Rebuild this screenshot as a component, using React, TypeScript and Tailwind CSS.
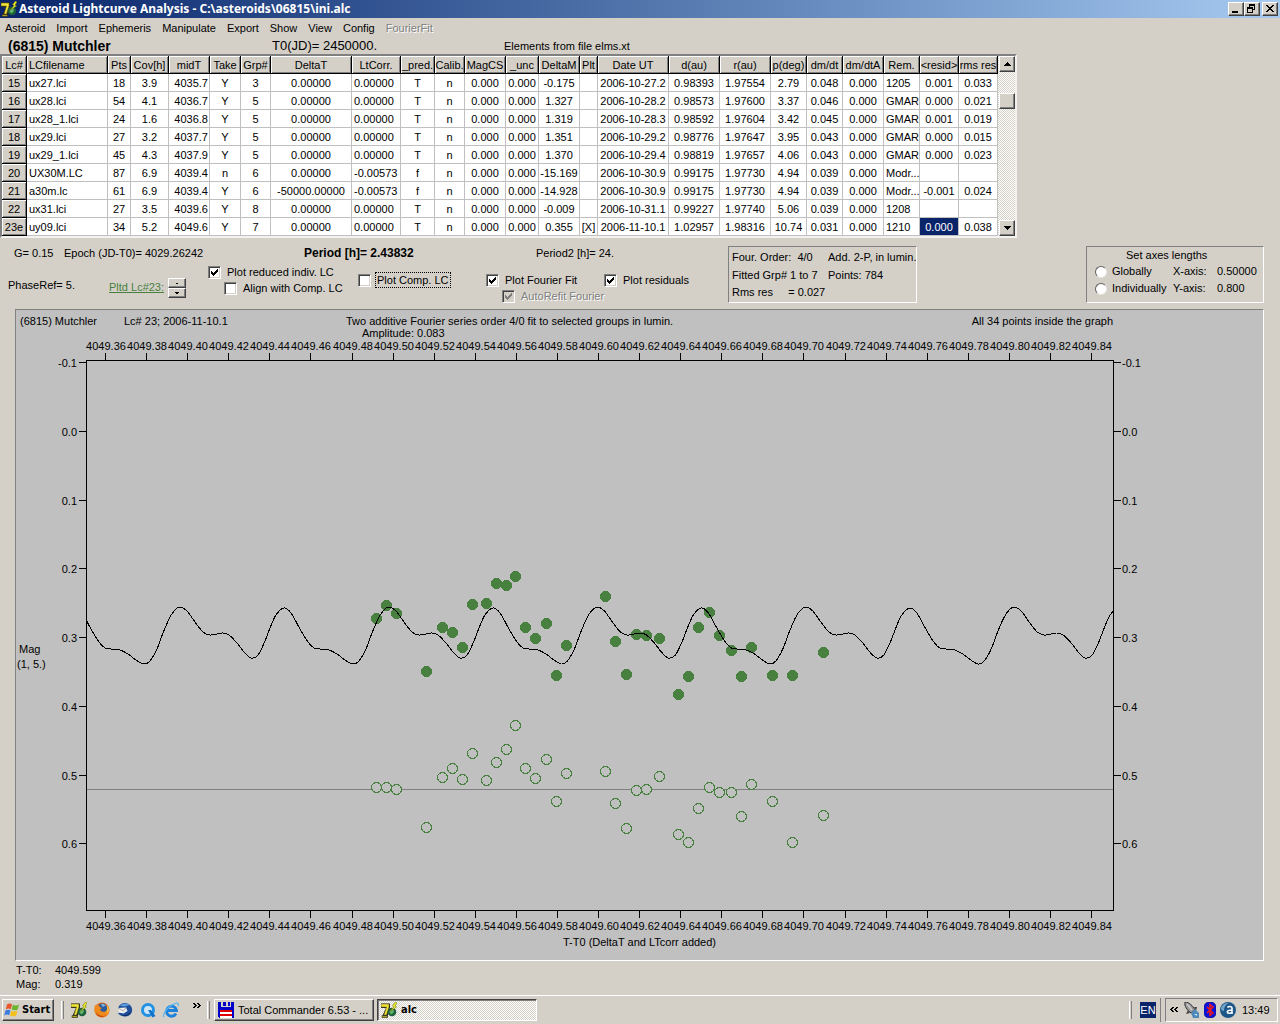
import React, { useState } from 'react';

type Align = 'left' | 'center' | 'right';

interface Column {
  label: string;
  width: string;
  align: Align;
}

const columns: Column[] = [
  { label: 'LCfilename', width: 'w-[81px]', align: 'left' },
  { label: 'Pts', width: 'w-[23px]', align: 'center' },
  { label: 'Cov[h]', width: 'w-[38px]', align: 'center' },
  { label: 'midT', width: 'w-[41px]', align: 'right' },
  { label: 'Take', width: 'w-[31px]', align: 'center' },
  { label: 'Grp#', width: 'w-[30px]', align: 'center' },
  { label: 'DeltaT', width: 'w-[81px]', align: 'center' },
  { label: 'LtCorr.', width: 'w-[49px]', align: 'left' },
  { label: '_pred.', width: 'w-[34px]', align: 'center' },
  { label: 'Calib.', width: 'w-[30px]', align: 'center' },
  { label: 'MagCS', width: 'w-[41px]', align: 'center' },
  { label: '_unc', width: 'w-[33px]', align: 'center' },
  { label: 'DeltaM', width: 'w-[41px]', align: 'center' },
  { label: 'Plt', width: 'w-[18px]', align: 'center' },
  { label: 'Date UT', width: 'w-[71px]', align: 'center' },
  { label: 'd(au)', width: 'w-[51px]', align: 'center' },
  { label: 'r(au)', width: 'w-[51px]', align: 'center' },
  { label: 'p(deg)', width: 'w-[36px]', align: 'center' },
  { label: 'dm/dt', width: 'w-[36px]', align: 'center' },
  { label: 'dm/dtA', width: 'w-[41px]', align: 'center' },
  { label: 'Rem.', width: 'w-[36px]', align: 'left' },
  { label: '<resid>', width: 'w-[39px]', align: 'center' },
  { label: 'rms res', width: 'w-[39px]', align: 'center' },
];

const rows: string[][] = [
  ['15', 'ux27.lci', '18', '3.9', '4035.7', 'Y', '3', '0.00000', '0.00000', 'T', 'n', '0.000', '0.000', '-0.175', '', '2006-10-27.2', '0.98393', '1.97554', '2.79', '0.048', '0.000', '1205', '0.001', '0.033'],
  ['16', 'ux28.lci', '54', '4.1', '4036.7', 'Y', '5', '0.00000', '0.00000', 'T', 'n', '0.000', '0.000', '1.327', '', '2006-10-28.2', '0.98573', '1.97600', '3.37', '0.046', '0.000', 'GMAR', '0.000', '0.021'],
  ['17', 'ux28_1.lci', '24', '1.6', '4036.8', 'Y', '5', '0.00000', '0.00000', 'T', 'n', '0.000', '0.000', '1.319', '', '2006-10-28.3', '0.98592', '1.97604', '3.42', '0.045', '0.000', 'GMAR', '0.001', '0.019'],
  ['18', 'ux29.lci', '27', '3.2', '4037.7', 'Y', '5', '0.00000', '0.00000', 'T', 'n', '0.000', '0.000', '1.351', '', '2006-10-29.2', '0.98776', '1.97647', '3.95', '0.043', '0.000', 'GMAR', '0.000', '0.015'],
  ['19', 'ux29_1.lci', '45', '4.3', '4037.9', 'Y', '5', '0.00000', '0.00000', 'T', 'n', '0.000', '0.000', '1.370', '', '2006-10-29.4', '0.98819', '1.97657', '4.06', '0.043', '0.000', 'GMAR', '0.000', '0.023'],
  ['20', 'UX30M.LC', '87', '6.9', '4039.4', 'n', '6', '0.00000', '-0.00573', 'f', 'n', '0.000', '0.000', '-15.169', '', '2006-10-30.9', '0.99175', '1.97730', '4.94', '0.039', '0.000', 'Modr...', '', ''],
  ['21', 'a30m.lc', '61', '6.9', '4039.4', 'Y', '6', '-50000.00000', '-0.00573', 'f', 'n', '0.000', '0.000', '-14.928', '', '2006-10-30.9', '0.99175', '1.97730', '4.94', '0.039', '0.000', 'Modr...', '-0.001', '0.024'],
  ['22', 'ux31.lci', '27', '3.5', '4039.6', 'Y', '8', '0.00000', '0.00000', 'T', 'n', '0.000', '0.000', '-0.009', '', '2006-10-31.1', '0.99227', '1.97740', '5.06', '0.039', '0.000', '1208', '', ''],
  ['23e', 'uy09.lci', '34', '5.2', '4049.6', 'Y', '7', '0.00000', '0.00000', 'T', 'n', '0.000', '0.000', '0.355', '[X]', '2006-11-10.1', '1.02957', '1.98316', '10.74', '0.031', '0.000', '1210', '0.000', '0.038'],
];

const SELECTED_COL = 21;

const alignClass: Record<Align, string> = {
  left: 'text-left pl-[2px]',
  center: 'text-center',
  right: 'text-right pr-px',
};

const raised =
  'bg-[#d4d0c8] border border-t-white border-l-white border-r-[#404040] border-b-[#404040] shadow-[inset_-1px_-1px_0_#808080]';
const fixedCell =
  'h-[18px] p-0 pt-[2px] overflow-hidden font-normal bg-[#d4d0c8] border-r border-b border-black shadow-[inset_1px_1px_0_#fff,inset_-1px_-1px_0_#808080]';
const dither = 'bg-[repeating-conic-gradient(#fff_0_25%,#d4d0c8_0_50%)] bg-[length:2px_2px]';

/* ---------- icons ---------- */

const AlcIcon = () => (
  <svg viewBox="0 0 16 16" className="w-4 h-4 shrink-0">
    <path d="M0 1.500h9v4L6.500 15H2V12.500L5 6H0z" fill="#222" />
    <path d="M0 2h8v3L5.500 13H3L5.500 5H0z" fill="#f2e63c" stroke="#6b6510" strokeWidth=".6" />
    <path d="M1 13.500h5.500v2H1z" fill="#a8a020" stroke="#222" strokeWidth=".6" />
    <circle cx="11" cy="10" r="4.300" fill="#1d5f3a" />
    <path d="M9 8.500l2-1 2 1-.5 2-2 2-2-2z" fill="#5fb56a" />
    <path d="M14.500 0l-3 3.500 1.500 1L9 9.500l6.500-4.500-1.500-1L16 1z" fill="#f6ee22" stroke="#556b10" strokeWidth=".5" />
  </svg>
);

const FirefoxIcon = () => (
  <svg viewBox="0 0 16 16" className="w-4 h-4">
    <circle cx="8" cy="8" r="7.500" fill="#e0661a" />
    <circle cx="8.500" cy="6.500" r="5" fill="#2c5c9e" />
    <path d="M7 2.500c2-1 4 0 4.500 1L9 5z" fill="#7fb4dc" />
    <path d="M1 3c1 .5 1.500.5 2.500.2C5 3 6 4 5.500 5L8 6 6 7.500C7 10 10 10.500 12 9c1.500-1.500 1-4 .5-6C15 5 16 9 14 12c-2.500 4-9 4.500-12 .5C0 9.500 0 6 1 3z" fill="#f08a1d" />
    <path d="M12.500 3c2.500 2.500 3 6 .5 9 .5-3 .8-6-.5-9z" fill="#fbd24a" />
    <path d="M2 10c2 4 7 5 10 3-3 3-9 2.500-10-3z" fill="#b5350f" />
  </svg>
);

const ThunderbirdIcon = () => (
  <svg viewBox="0 0 16 16" className="w-4 h-4">
    <path d="M2 4C5-.5 12 0 14.500 5c2 5-1 9.500-6 9.500C5 14.500 2 13 1 11l4-1-4-3z" fill="#1f4f9a" />
    <path d="M3 4c3-3 7-3 9.500-1L8 4.500z" fill="#5b9bdc" />
    <path d="M1 6l8-.5 1.500 3.500-4 2.500-4.500-1z" fill="#eef0ee" />
    <path d="M1 6l5.500 3L9 5.500" fill="none" stroke="#9a9a90" strokeWidth=".8" />
    <path d="M3 12c3 2 8 2 11-3-1 5-7 7-11 3z" fill="#0c2a63" />
  </svg>
);

const QuickTimeIcon = () => (
  <svg viewBox="0 0 16 16" className="w-4 h-4">
    <circle cx="8" cy="8" r="5.500" fill="#cfe6f8" stroke="#2492e2" strokeWidth="3" />
    <path d="M8 8l3 0 4.500 6-3 1.500z" fill="#1272c8" />
  </svg>
);

const ExplorerIcon = () => (
  <svg viewBox="0 0 16 16" className="w-4 h-4">
    <path d="M13 11.500A5 5 0 1 1 13.500 8.500H4.500" fill="none" stroke="#1c82dc" strokeWidth="2.800" />
    <path d="M1 15C-1 12 5 4 12 1.500c3-1 4 .5 3 2.500" fill="none" stroke="#5ab4f0" strokeWidth="1.200" />
  </svg>
);

const FloppyIcon = () => (
  <svg viewBox="0 0 16 16" className="w-4 h-4 shrink-0" shapeRendering="crispEdges">
    <path d="M0 0h16v16H1l-1-1z" fill="#0000c8" />
    <path d="M3 0h10v5H3z" fill="#d4d0c8" />
    <path d="M5 0h3v4H5zM10 0h2v4h-2z" fill="#0000c8" />
    <path d="M2 8h12v8H2z" fill="#fff" />
    <path d="M2 8h12v2H2zM2 12h12v2H2z" fill="#e00000" />
  </svg>
);

const StartFlag = () => (
  <svg viewBox="0 0 16 16" className="w-4 h-4 shrink-0">
    <path d="M3 2.500c2-1.500 3.500-1.300 5-.3L6.800 7.200c-1.600-1-3-1-5 .2z" fill="#e8552d" />
    <path d="M8.800 2.700c2 1 4 1 6.200-.2l-1.300 5c-2 1.200-4.200 1-6.100 0z" fill="#6cb52d" />
    <path d="M1.500 8.500c2-1.200 3.500-1 5-.2l-1.300 5c-1.500-1-3-1-5 .2z" fill="#3c7be0" />
    <path d="M7.300 8.800c2 1 4 1 6.200-.2l-1.300 5c-2 1.200-4 1-6.200 0z" fill="#f4c01e" />
  </svg>
);

const RocketIcon = () => (
  <svg viewBox="0 0 16 16" className="w-4 h-4">
    <path d="M1 0c4 0 8 4 10 8l-4 3C3 8 0 4 1 0z" fill="#9a9a9a" stroke="#333" strokeWidth="1" />
    <path d="M3 2l5 6" stroke="#d0d0d0" strokeWidth="1.200" />
    <path d="M4 8L2 12l4-1zM10 5l3 0-1 4z" fill="#444" />
    <path d="M7 11l4-4 4 4v5H9z" fill="#4f8ab8" />
    <path d="M10 12l3 0v2z" fill="#cfe6f4" />
  </svg>
);

const BluetoothIcon = () => (
  <svg viewBox="0 0 12 16" className="w-3 h-4">
    <rect x="0" y="0" width="12" height="16" rx="5" fill="#0a12e0" stroke="#101060" strokeWidth=".6" />
    <path d="M3 5l6 6-3 2.500v-11L9 5l-6 6" fill="none" stroke="#f01818" strokeWidth="1.500" />
  </svg>
);

const AvastIcon = () => (
  <svg viewBox="0 0 16 16" className="w-4 h-4">
    <circle cx="8" cy="8" r="8" fill="#1d5788" />
    <path d="M1 6a7 7 0 0 1 8-5C6 2 4 5 4 9 2 9 1 8 1 6z" fill="#6fa3c8" />
    <path d="M7.500 5.500c1-1.500 4.500-1.500 4.500.5V12M12 8c-3 0-4.700.5-4.700 2s3.200 1.800 4.700.2" fill="none" stroke="#fff" strokeWidth="1.600" />
  </svg>
);

const Chevrons: React.FC<{ left?: boolean }> = ({ left = false }) => (
  <svg viewBox="0 0 8 5" shapeRendering="crispEdges" className="w-2 h-[5px]">
    <path
      d={
        left
          ? 'M2 0h2v1H3v1H2v1h1v1h1v1H2V4H1V3H0V2h1V1h1zM6 0h2v1H7v1H6v1h1v1h1v1H6V4H5V3H4V2h1V1h1z'
          : 'M0 0h2v1h1v1h1v1H3v1H2v1H0V4h1V3h1V2H1V1H0zM4 0h2v1h1v1h1v1H7v1H6v1H4V4h1V3h1V2H5V1H4z'
      }
    />
  </svg>
);

/* ---------- form controls ---------- */

interface CheckProps {
  label: string;
  initial?: boolean;
  disabled?: boolean;
  focused?: boolean;
}

const Check: React.FC<CheckProps> = ({ label, initial = false, disabled = false, focused = false }) => {
  const [checked, setChecked] = useState(initial);
  return (
    <label className="flex items-center h-4 whitespace-nowrap">
      <span className="relative flex">
        <input
          type="checkbox"
          checked={checked}
          disabled={disabled}
          onChange={() => setChecked(!checked)}
          className={`appearance-none w-[13px] h-[13px] border border-t-[#808080] border-l-[#808080] border-r-white border-b-white shadow-[inset_1px_1px_0_#404040,inset_-1px_-1px_0_#d4d0c8] ${
            disabled ? 'bg-[#d4d0c8]' : 'bg-white'
          }`}
        />
        {checked && (
          <svg viewBox="0 0 13 13" shapeRendering="crispEdges" className="absolute inset-0 w-[13px] h-[13px] pointer-events-none">
            <path
              d="M3 5h1v1h1v1h1v-1h1v-1h1v-1h1v-1h1v3h-1v1h-1v1h-1v1h-1v1h-1v-1h-1v-1h-1z"
              fill={disabled ? '#808080' : '#000'}
            />
          </svg>
        )}
      </span>
      <span
        className={`ml-1 px-px pt-px leading-[13px] border border-dotted ${focused ? 'border-black' : 'border-transparent'} ${
          disabled ? 'text-[#808080] [text-shadow:1px_1px_0_#fff]' : ''
        }`}
      >
        {label}
      </span>
    </label>
  );
};

const AxisRadio: React.FC<{ label: string }> = ({ label }) => (
  <label className="flex items-center gap-[5px] h-[17px]">
    <input
      type="radio"
      name="axes"
      className="appearance-none w-3 h-3 rounded-full bg-white border border-t-[#606060] border-l-[#606060] border-r-[#e8e6e2] border-b-[#e8e6e2] checked:bg-black"
    />
    {label}
  </label>
);

const Arrow: React.FC<{ up?: boolean; small?: boolean }> = ({ up = false, small = false }) => (
  <svg viewBox="0 0 7 4" shapeRendering="crispEdges" className={small ? 'w-[4px] h-[2px]' : 'w-[7px] h-1'}>
    <path d={up ? 'M3 0h1v1h1v1h1v1h1v1H0V3h1V2h1V1h1z' : 'M0 0h7v1H6v1H5v1H4v1H3V3H2V2H1V1H0z'} />
  </svg>
);

/* ---------- window parts ---------- */

const TitleBar = () => (
  <div className="flex items-center h-[18px] pl-px pr-[2px] bg-linear-to-r from-[#0a246a] to-[#a6caf0]">
    <AlcIcon />
    <h1 className="ml-[2px] font-['Noto_Sans',sans-serif] text-[12px] leading-[18px] font-bold text-white whitespace-nowrap">
      Asteroid Lightcurve Analysis - C:\asteroids\06815\ini.alc
    </h1>
    <div className="flex ml-auto">
      <button aria-label="Minimize" className={`w-4 h-[14px] ${raised}`}>
        <svg viewBox="0 0 14 12" className="w-[14px] h-3" shapeRendering="crispEdges">
          <path d="M3 8h6v2H3z" />
        </svg>
      </button>
      <button aria-label="Restore" className={`w-4 h-[14px] ${raised}`}>
        <svg viewBox="0 0 14 12" className="w-[14px] h-3" shapeRendering="crispEdges">
          <path d="M4 1h6v6H8V6h1V3H5v1H4zM2 4h6v6H2zM3 6v3h4V6z" fillRule="evenodd" />
        </svg>
      </button>
      <button aria-label="Close" className={`ml-[2px] w-4 h-[14px] ${raised}`}>
        <svg viewBox="0 0 14 12" className="w-[14px] h-3" shapeRendering="crispEdges">
          <path d="M3 2h2v1h1v1h2V3h1V2h2v1h-1v1H9v1H8v1h1v1h1v1h1v1H9V8H8V7H6v1H5v1H3V8h1V7h1V6h1V5H5V4H4V3H3z" />
        </svg>
      </button>
    </div>
  </div>
);

const menus = ['Asteroid', 'Import', 'Ephemeris', 'Manipulate', 'Export', 'Show', 'View', 'Config'];

const MenuBar = () => (
  <nav className="flex items-center gap-[11px] h-5 px-[5px]">
    {menus.map(m => (
      <button key={m}>{m}</button>
    ))}
    <button disabled className="text-[#808080] [text-shadow:1px_1px_0_#fff]">
      FourierFit
    </button>
  </nav>
);

const LightcurveTable = () => (
  <div className="flex self-start border-2 border-t-[#808080] border-l-[#808080] border-r-[#f4f2ee] border-b-[#f4f2ee] bg-white">
    <table className="table-fixed border-separate border-spacing-0 w-[996px] leading-[15px]">
      <thead>
        <tr>
          <th className={`w-[25px] ${fixedCell}`}>Lc#</th>
          {columns.map(c => (
            <th
              key={c.label}
              className={`${c.width} ${fixedCell} whitespace-nowrap ${c.label === 'LCfilename' ? 'text-left pl-[2px]' : 'text-center'}`}
            >
              {c.label}
            </th>
          ))}
        </tr>
      </thead>
      <tbody>
        {rows.map(([id, ...cells], r) => (
          <tr key={id}>
            <th className={fixedCell}>{id}</th>
            {cells.map((v, i) => (
              <td
                key={i}
                className={`h-[18px] p-0 pt-[2px] overflow-hidden whitespace-nowrap border-r border-b border-[#c0c0c0] ${alignClass[columns[i].align]} ${
                  r === rows.length - 1 && i === SELECTED_COL ? 'bg-[#0a246a] text-white' : ''
                }`}
              >
                {v}
              </td>
            ))}
          </tr>
        ))}
      </tbody>
    </table>
    <div className={`flex flex-col w-[17px] pl-px ${dither}`}>
      <button aria-label="Scroll up" className={`flex items-center justify-center h-4 ${raised}`}>
        <Arrow up />
      </button>
      <div className={`mt-[21px] h-4 ${raised}`} />
      <button aria-label="Scroll down" className={`mt-auto flex items-center justify-center h-4 ${raised}`}>
        <Arrow />
      </button>
    </div>
  </div>
);

const sunkenBox = 'border border-t-[#808080] border-l-[#808080] border-r-white border-b-white';

const Controls = () => (
  <section className="flex h-[71px] whitespace-nowrap">
    <div className="w-[728px] shrink-0">
      <div className="flex items-center h-4 mt-[7px] pl-[14px]">
        <span className="w-[50px]">G= 0.15</span>
        <span className="w-[240px]">Epoch (JD-T0)= 4029.26242</span>
        <span className="w-[232px] text-[12px] font-bold">Period [h]= 2.43832</span>
        <span>Period2 [h]= 24.</span>
      </div>
      <div className="flex pl-2">
        <span className="w-[101px] pt-[17px]">PhaseRef= 5.</span>
        <a href="#lc23" className="w-[59px] pt-[19px] text-[#488040] underline">
          Pltd Lc#23:
        </a>
        <div className="flex flex-col w-[18px] mt-[17px]">
          <button aria-label="Next lightcurve" className={`flex items-center justify-center h-[10px] ${raised}`}>
            <Arrow up small />
          </button>
          <button aria-label="Previous lightcurve" className={`flex items-center justify-center h-[10px] ${raised}`}>
            <Arrow small />
          </button>
        </div>
        <div className="w-[150px] ml-[22px] mt-[3px]">
          <Check label="Plot reduced indiv. LC" initial />
          <div className="pl-4">
            <Check label="Align with Comp. LC" />
          </div>
        </div>
        <div className="w-32 mt-[11px]">
          <Check label="Plot Comp. LC" focused />
        </div>
        <div className="w-[118px] mt-[11px]">
          <Check label="Plot Fourier Fit" initial />
          <div className="pl-4">
            <Check label="AutoRefit Fourier" initial disabled />
          </div>
        </div>
        <div className="mt-[11px]">
          <Check label="Plot residuals" initial />
        </div>
      </div>
    </div>
    <div className={`grid grid-cols-[96px_auto] self-start mt-2 h-[57px] w-[189px] pl-[3px] pt-[2px] leading-4 ${sunkenBox}`}>
      <span className="whitespace-pre">Four. Order:  4/0</span>
      <span>Add. 2-P, in lumin.</span>
      <span>Fitted Grp# 1 to 7</span>
      <span>Points: 784</span>
      <span className="whitespace-pre">Rms res     = 0.027</span>
    </div>
    <fieldset className={`ml-auto mr-4 self-start mt-2 h-[57px] w-[178px] pl-2 ${sunkenBox}`}>
      <div className="pl-[31px] leading-[16px]">Set axes lengths</div>
      <div className="grid grid-cols-[78px_44px_auto] items-center leading-[17px]">
        <AxisRadio label="Globally" />
        <span>X-axis:</span>
        <span>0.50000</span>
        <AxisRadio label="Individually" />
        <span>Y-axis:</span>
        <span>0.800</span>
      </div>
    </fieldset>
  </section>
);

/* ---------- chart ---------- */

const FRAME = { left: 86, right: 1113, top: 360, bottom: 910 };
const PERIOD = 209;

// one cycle of the Fourier fit, minimum to minimum
const cycle: [number, number][] = [
  [144, 664], [150, 661], [157, 649], [163, 633], [170, 617], [175, 610], [180, 607], [187, 611],
  [195, 622], [203, 632], [210, 635], [217, 634], [223, 633], [229, 635], [237, 643], [244, 652],
  [251, 658], [258, 655], [265, 641], [270, 628], [276, 615], [284, 608], [291, 613], [300, 629],
  [308, 642], [314, 648], [320, 649], [329, 650], [337, 654], [345, 660],
];

// [x, magnitude y, residual y]
const points: [number, number, number][] = [
  [376, 618, 787], [386, 605, 787], [396, 613, 789], [426, 671, 827], [442, 627, 777], [452, 632, 768],
  [462, 647, 779], [472, 604, 753], [486, 603, 780], [496, 583, 762], [506, 585, 749], [515, 576, 725],
  [525, 627, 768], [535, 638, 778], [546, 623, 759], [556, 675, 801], [566, 645, 773], [605, 596, 771],
  [615, 641, 803], [626, 674, 828], [636, 634, 790], [646, 635, 789], [659, 638, 776], [678, 694, 834],
  [688, 676, 842], [698, 627, 808], [709, 612, 787], [719, 635, 792], [731, 650, 792], [741, 676, 816],
  [751, 647, 784], [772, 675, 801], [792, 675, 842], [823, 652, 815],
];

const xTicks = Array.from({ length: 25 }, (_, i) => ({
  x: Math.round(105 + (i * 986) / 24),
  label: (4049.36 + i * 0.02).toFixed(2),
}));

const yTicks = Array.from({ length: 8 }, (_, i) => ({
  y: Math.round(362 + i * 68.75),
  label: ((i - 1) / 10).toFixed(1),
}));

const fitPath = () => {
  const pts: [number, number][] = [];
  for (let k = -1; k < 6; k++) {
    cycle.forEach(([x, y]) => pts.push([x + k * PERIOD - (k > 1 ? k - 1 : 0) * 0.6, y]));
  }
  let d = `M${pts[1][0]} ${pts[1][1]}`;
  for (let i = 1; i < pts.length - 2; i++) {
    const [p0, p1, p2, p3] = [pts[i - 1], pts[i], pts[i + 1], pts[i + 2]];
    const c1 = [p1[0] + (p2[0] - p0[0]) / 6, p1[1] + (p2[1] - p0[1]) / 6];
    const c2 = [p2[0] - (p3[0] - p1[0]) / 6, p2[1] - (p3[1] - p1[1]) / 6];
    d += `C${c1[0]} ${c1[1]} ${c2[0]} ${c2[1]} ${p2[0]} ${p2[1]}`;
  }
  return d;
};

const Plot = () => (
  <svg viewBox="16 339 1247 596" className="block w-full text-[11px]" role="img" aria-label="Lightcurve">
    <clipPath id="frame">
      <rect x={FRAME.left} y={FRAME.top} width={FRAME.right - FRAME.left} height={FRAME.bottom - FRAME.top} />
    </clipPath>
    <g stroke="#000" fill="none" shapeRendering="crispEdges">
      <rect x={86.5} y={360.5} width={1027} height={550} />
      {xTicks.map(t => (
        <path key={t.x} d={`M${t.x + 0.5} 353V360M${t.x + 0.5} 911V918`} />
      ))}
      {yTicks.map(t => (
        <path key={t.y} d={`M79 ${t.y + 0.5}H86M1114 ${t.y + 0.5}H1121`} />
      ))}
    </g>
    {xTicks.map(t => (
      <g key={t.x} textAnchor="middle">
        <text x={t.x + 1} y={350}>{t.label}</text>
        <text x={t.x + 1} y={930}>{t.label}</text>
      </g>
    ))}
    {yTicks.map(t => (
      <g key={t.y}>
        <text x={77} y={t.y + 5} textAnchor="end">{t.label}</text>
        <text x={1122} y={t.y + 5}>{t.label}</text>
      </g>
    ))}
    <text x={19} y={653}>Mag</text>
    <text x={17} y={668}>(1, 5.)</text>
    <path d="M87 789.5H1113" stroke="#808080" shapeRendering="crispEdges" />
    {points.map(([x, y, res]) => (
      <g key={x} shapeRendering="crispEdges">
        <circle cx={x + 0.5} cy={y + 0.5} r={5.5} fill="#488040" />
        <circle cx={x + 0.5} cy={res + 0.5} r={5} fill="#c0c0c0" stroke="#488040" />
      </g>
    ))}
    <path d={fitPath()} clipPath="url(#frame)" fill="none" stroke="#000" shapeRendering="crispEdges" />
  </svg>
);

const ChartPanel = () => (
  <section className={`ml-[15px] mr-4 bg-[#c0c0c0] leading-3 ${sunkenBox}`}>
    <div className="flex pt-[5px] pl-1 whitespace-nowrap">
      <span className="w-[104px]">(6815) Mutchler</span>
      <span className="w-[222px]">Lc# 23; 2006-11-10.1</span>
      <div>
        <p>Two additive Fourier series order 4/0 fit to selected groups in lumin.</p>
        <p className="pl-4">Amplitude: 0.083</p>
      </div>
      <span className="ml-auto mr-[150px]">All 34 points inside the graph</span>
    </div>
    <Plot />
    <p className="pt-px pb-3 text-center">T-T0 (DeltaT and LTcorr added)</p>
  </section>
);

/* ---------- taskbar ---------- */

const Grip = () => <div className="w-[3px] h-[18px] border-l border-l-white border-r border-r-[#808080] bg-[#d4d0c8]" />;

const Taskbar = () => (
  <footer className="flex items-center mt-auto h-[29px] border-t border-white pl-[2px] pr-[2px] pb-px whitespace-nowrap">
    <button className={`flex items-center gap-[2px] w-[52px] h-[22px] pl-px font-['DejaVu_Sans_Condensed','DejaVu_Sans',sans-serif] font-bold ${raised}`}>
      <StartFlag />
      Start
    </button>
    <div className="ml-[7px]"><Grip /></div>
    <div className="flex items-center gap-[7px] ml-[7px]">
      <button aria-label="alc"><AlcIcon /></button>
      <button aria-label="Firefox"><FirefoxIcon /></button>
      <button aria-label="Thunderbird"><ThunderbirdIcon /></button>
      <button aria-label="QuickTime"><QuickTimeIcon /></button>
      <button aria-label="Internet Explorer"><ExplorerIcon /></button>
    </div>
    <button aria-label="More" className="ml-[14px] pb-2"><Chevrons /></button>
    <div className="ml-[6px]"><Grip /></div>
    <button className={`flex items-center gap-1 ml-1 w-40 h-[22px] pl-[3px] ${raised}`}>
      <FloppyIcon />
      Total Commander 6.53 - ...
    </button>
    <button
      className={`flex items-center gap-1 ml-[3px] w-40 h-[22px] pl-[3px] font-['DejaVu_Sans_Condensed','DejaVu_Sans',sans-serif] font-bold border border-t-[#404040] border-l-[#404040] border-r-white border-b-white shadow-[inset_1px_1px_0_#808080] ${dither}`}
    >
      <AlcIcon />
      alc
    </button>
    <div className="ml-auto"><Grip /></div>
    <button className="ml-2 w-4 h-4 bg-[#0a246a] text-white text-center leading-4">EN</button>
    <div className="ml-1 w-px h-6 bg-[#808080]" />
    <div className={`flex items-center ml-1 w-[113px] h-6 pl-1 ${sunkenBox}`}>
      <button aria-label="Show hidden icons"><Chevrons left /></button>
      <div className="flex items-center gap-1 ml-[6px]">
        <RocketIcon />
        <BluetoothIcon />
        <AvastIcon />
      </div>
      <time className="ml-[6px]">13:49</time>
    </div>
  </footer>
);

const App: React.FC = () => (
  <div className="flex flex-col min-h-screen bg-[#d4d0c8] font-['Liberation_Sans',Arial,sans-serif] text-[11px] leading-[14px] text-black">
    <TitleBar />
    <MenuBar />
    <div className="flex items-center h-4 pl-2 whitespace-nowrap">
      <h2 className="w-[264px] text-[14px] font-bold">(6815) Mutchler</h2>
      <span className="w-[232px] text-[13px]">T0(JD)= 2450000.</span>
      <span>Elements from file elms.xt</span>
    </div>
    <LightcurveTable />
    <Controls />
    <ChartPanel />
    <div className="grid grid-cols-[39px_auto] mt-[2px] pl-4">
      <span>T-T0:</span>
      <span>4049.599</span>
      <span>Mag:</span>
      <span>0.319</span>
    </div>
    <Taskbar />
  </div>
);

export default App;
